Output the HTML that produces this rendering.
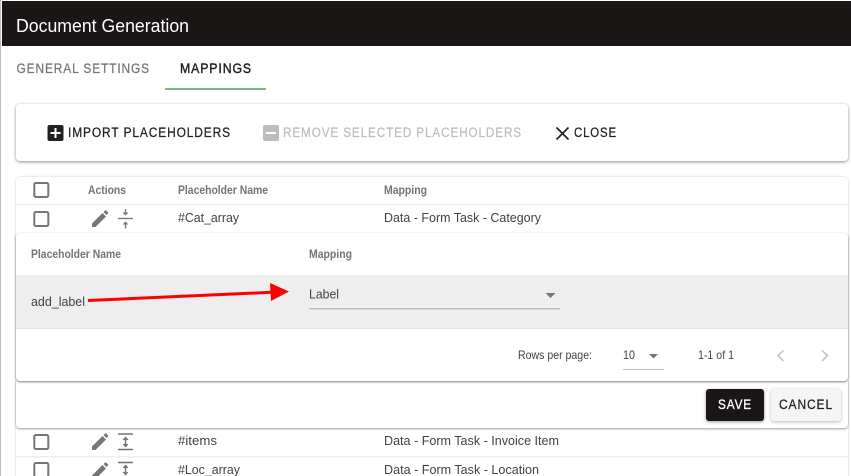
<!DOCTYPE html>
<html><head><meta charset="utf-8"><style>
html,body{margin:0;padding:0;width:851px;height:476px;overflow:hidden;background:#fff}
body{position:relative;font-family:"Liberation Sans",sans-serif}
.c{position:absolute;background:#fff;border-radius:4px}
svg{position:absolute;left:0;top:0}
text{font-family:"Liberation Sans",sans-serif}
.b{font-size:13.5px;letter-spacing:1px;fill:#212121;stroke:#212121;stroke-width:.25px}
.g{fill:#757575;stroke:#757575}
.d{fill:#bdbdbd;stroke:#bdbdbd}
.h{font-size:11.5px;font-weight:bold;fill:#757575}
.t{font-size:13px;fill:#424242}
.s{font-size:12px;fill:#424242}
</style></head><body>
<div style="position:absolute;left:0;top:0;width:1px;height:476px;background:#bdbdbd"></div>
<div style="position:absolute;left:2px;top:1px;width:849px;height:45px;background:#1a1615"></div>
<div class="c" style="left:16px;top:104px;width:832px;height:57px;box-shadow:0 1px 3px rgba(0,0,0,.45)"></div>
<div class="c" style="left:16px;top:177px;width:832px;height:310px;box-shadow:0 0 2px rgba(0,0,0,.22)"></div>
<div class="c" style="left:16px;top:381px;width:832px;height:47px;border-radius:0 0 4px 4px;box-shadow:0 1px 2px rgba(0,0,0,.4)"></div>
<div class="c" style="left:16px;top:233px;width:832px;height:148px;box-shadow:0 1px 2px rgba(0,0,0,.5)"></div>
<div style="position:absolute;left:16px;top:275px;width:832px;height:53px;background:#eee;border-bottom:1px solid #e4e4e4"></div>
<div class="c" style="left:706px;top:389px;width:58px;height:32px;border-radius:3px;background:#1a1615;box-shadow:0 1px 3px rgba(0,0,0,.4)"></div>
<div class="c" style="left:771px;top:389px;width:70px;height:32px;border-radius:3px;background:#f5f5f5;box-shadow:0 1px 3px rgba(0,0,0,.3)"></div>
<svg width="851" height="476" viewBox="0 0 851 476">
<text x="16" y="32" font-size="18.500" fill="#fff" textLength="173" lengthAdjust="spacingAndGlyphs">Document Generation</text>
<text x="16.500" y="73" class="b g" textLength="133.500" lengthAdjust="spacingAndGlyphs">GENERAL SETTINGS</text>
<text x="180" y="73" class="b" style="stroke-width:.4px" textLength="72" lengthAdjust="spacingAndGlyphs">MAPPINGS</text>
<rect x="165" y="88" width="101" height="2" fill="#7ab87e"/>

<rect x="47.500" y="125" width="16" height="16" rx="2" fill="#212121"/>
<path d="M50.500 133h10M55.500 128v10" stroke="#fff" stroke-width="2"/>
<text x="68" y="137" class="b" textLength="163" lengthAdjust="spacingAndGlyphs">IMPORT PLACEHOLDERS</text>
<rect x="263" y="125" width="16" height="16" rx="2" fill="#bdbdbd"/>
<path d="M266 133h10" stroke="#fff" stroke-width="2"/>
<text x="283" y="137" class="b d" textLength="239" lengthAdjust="spacingAndGlyphs">REMOVE SELECTED PLACEHOLDERS</text>
<path d="M556.500 127.500L568.500 139.500M568.500 127.500L556.500 139.500" stroke="#212121" stroke-width="1.700" fill="none"/>
<text x="574" y="137" class="b" textLength="43" lengthAdjust="spacingAndGlyphs">CLOSE</text>

<g fill="none" stroke="#757575" stroke-width="2">
<rect x="34.300" y="183" width="14" height="14" rx="1.500"/>
<rect x="34.300" y="212" width="14" height="14" rx="1.500"/>
<rect x="34.300" y="435" width="14" height="14" rx="1.500"/>
<rect x="34.300" y="463" width="14" height="14" rx="1.500"/>
</g>
<text x="88" y="194" class="h" textLength="38" lengthAdjust="spacingAndGlyphs">Actions</text>
<text x="178" y="194" class="h" textLength="90" lengthAdjust="spacingAndGlyphs">Placeholder Name</text>
<text x="384" y="194" class="h" textLength="43" lengthAdjust="spacingAndGlyphs">Mapping</text>
<rect x="16" y="204" width="832" height="1" fill="#eee"/>

<path id="p1" d="M92 227v-3.500l10.500-10.500 3.500 3.500-10.500 10.500zM103.500 212l1.300-1.300q.8-.8 1.600 0l1.400 1.400q.8.800 0 1.600l-1.300 1.300z" fill="#757575"/>
<path d="M118 218.500h15" stroke="#757575" stroke-width="1.300"/>
<path d="M125.500 209v4.500" stroke="#757575" stroke-width="1.300"/>
<path d="M122.500 212.500h6l-3 3zM122.500 224.500h6l-3-3z" fill="#757575"/>
<path d="M125.500 223.500v5" stroke="#757575" stroke-width="1.300"/>
<text x="178" y="222" class="t" textLength="61" lengthAdjust="spacingAndGlyphs">#Cat_array</text>
<text x="384" y="222" class="t" textLength="157" lengthAdjust="spacingAndGlyphs">Data - Form Task - Category</text>

<text x="31" y="258" class="h" textLength="90" lengthAdjust="spacingAndGlyphs">Placeholder Name</text>
<text x="309" y="258" class="h" textLength="43" lengthAdjust="spacingAndGlyphs">Mapping</text>
<text x="31" y="306" class="t" textLength="54" lengthAdjust="spacingAndGlyphs">add_label</text>
<text x="309" y="298.500" class="t" textLength="30" lengthAdjust="spacingAndGlyphs">Label</text>
<rect x="309" y="308" width="251" height="1.500" fill="#bdbdbd"/>
<path d="M545.500 293h10l-5 5z" fill="#757575"/>
<path d="M88 300.500L272 292.300" stroke="#f00" stroke-width="3"/>
<path d="M270 283L289 291.500 271 301z" fill="#f00"/>

<text x="518" y="359" class="s" textLength="74" lengthAdjust="spacingAndGlyphs">Rows per page:</text>
<text x="623" y="359" class="s" textLength="12" lengthAdjust="spacingAndGlyphs">10</text>
<path d="M649 354h9l-4.500 4.500z" fill="#757575"/>
<rect x="623" y="369" width="41" height="1" fill="#bdbdbd"/>
<text x="698" y="359" class="s" textLength="36" lengthAdjust="spacingAndGlyphs">1-1 of 1</text>
<path d="M783.500 350.500L778 355.500 783.500 361M822 350.500L827.500 355.500 822 361" fill="none" stroke="#bdbdbd" stroke-width="1.500"/>

<text x="718" y="409" class="b" style="fill:#fff;stroke:#fff;stroke-width:.35px" textLength="34" lengthAdjust="spacingAndGlyphs">SAVE</text>
<text x="779" y="409" class="b" textLength="54" lengthAdjust="spacingAndGlyphs">CANCEL</text>

<use href="#p1" y="223"/>
<g stroke="#757575" fill="#757575">
<path d="M118 434h15M118 449.500h15" stroke-width="1.600" fill="none"/>
<path d="M125.500 438v8" stroke-width="1.500"/>
<path d="M122.500 440l3-3.500 3 3.500zM122.500 444l3 3.500 3-3.500z" stroke="none"/>
</g>
<text x="178" y="445" class="t" textLength="39" lengthAdjust="spacingAndGlyphs">#items</text>
<text x="384" y="445" class="t" textLength="175" lengthAdjust="spacingAndGlyphs">Data - Form Task - Invoice Item</text>
<rect x="16" y="456" width="832" height="1.500" fill="#eee"/>
<use href="#p1" y="252"/>
<g stroke="#757575" fill="#757575">
<path d="M118 462.500h15" stroke-width="1.600" fill="none"/>
<path d="M125.500 466v9" stroke-width="1.500"/>
<path d="M122.500 468l3-3.500 3 3.500zM122.500 472l3 3.500 3-3.500z" stroke="none"/>
</g>
<text x="178" y="474" class="t" textLength="62" lengthAdjust="spacingAndGlyphs">#Loc_array</text>
<text x="384" y="474" class="t" textLength="155" lengthAdjust="spacingAndGlyphs">Data - Form Task - Location</text>
</svg>
</body></html>
